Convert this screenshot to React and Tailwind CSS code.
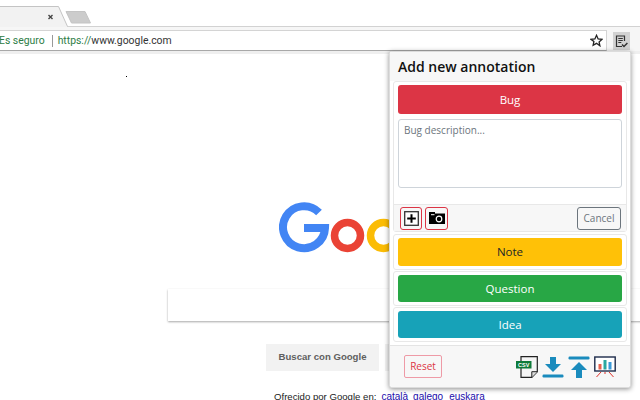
import React from 'react';

const panelFont = { fontFamily: '"Open Sans", "Noto Sans", sans-serif' };

function Logo() {
  // Google logo, cropped by the popup anyway
  return (
    <svg width="170" height="60" viewBox="0 0 170 60" fill="none" className="block">
      <path d="M40 10.5 A21 21 0 1 0 46 26 L25 26" stroke="#4285f4" strokeWidth="8" />
      <circle cx="68.5" cy="33.5" r="13" stroke="#ea4335" strokeWidth="7.5" />
      <circle cx="104.5" cy="33.5" r="13" stroke="#fbbc05" strokeWidth="7.5" />
    </svg>
  );
}

function PlusIcon() {
  return (
    <svg width="15" height="15" viewBox="0 0 15 15">
      <rect x="0.7" y="0.7" width="13.6" height="13.6" fill="#fff" stroke="#333" strokeWidth="1.3" />
      <path d="M7.5 3.2v8.6M3.2 7.5h8.6" stroke="#000" strokeWidth="2" />
    </svg>
  );
}

function CameraIcon() {
  return (
    <svg width="16" height="12" viewBox="0 0 16 12">
      <path d="M0 1.5V0h6v1.5h10V12H0z" fill="#000" />
      <rect x="2" y="2.2" width="3.5" height="1" fill="#fff" />
      <circle cx="10" cy="7" r="2.8" fill="#000" stroke="#fff" strokeWidth="1.2" />
    </svg>
  );
}

function CsvIcon() {
  return (
    <svg width="22" height="22" viewBox="0 0 22 22">
      <path d="M5 0.7h16.3v15l-5.5 5.6H5z" fill="#f5f5f5" stroke="#222" strokeWidth="1.2" />
      <path d="M15.8 21.3v-5.6h5.5" fill="#ddd" stroke="#222" strokeWidth="1" />
      <rect x="0" y="5" width="15.5" height="7.5" fill="#0f7a3a" />
      <text x="7.7" y="11" textAnchor="middle" fontSize="5.5" fontWeight="700" fill="#fff" fontFamily="Liberation Sans">CSV</text>
    </svg>
  );
}

function DownloadIcon() {
  return (
    <svg width="22" height="22" viewBox="0 0 22 22" fill="#1a8bbd">
      <path d="M8 1h6v7h5l-8 8-8-8h5z" />
      <rect x="0.5" y="18.5" width="21" height="3" rx="1.2" />
    </svg>
  );
}

function UploadIcon() {
  return (
    <svg width="22" height="22" viewBox="0 0 22 22" fill="#1a8bbd">
      <rect x="0.5" y="0.5" width="21" height="3" rx="1.2" />
      <path d="M11 6l8 8h-5v8H8v-8H3z" />
    </svg>
  );
}

function ChartIcon() {
  return (
    <svg width="22" height="22" viewBox="0 0 22 22">
      <rect x="0.8" y="1" width="20.4" height="14" fill="#fff" stroke="#1d2b4a" strokeWidth="1.4" />
      <rect x="4.5" y="8" width="3" height="5.5" fill="#e8604c" />
      <rect x="9.5" y="4" width="3" height="9.5" fill="#2ba8a0" />
      <rect x="14.5" y="6" width="3" height="7.5" fill="#3a9ad9" />
      <path d="M7 16l-4.5 5M15 16l4.5 5M11 16v2" stroke="#e0332b" strokeWidth="1" fill="none" />
    </svg>
  );
}

function ActionCard({ label, color, text, height, top }) {
  return (
    <div className={`mx-[3px] rounded-[3px] border border-[#e8e8e8] bg-white px-[4px] py-[3px] ${top}`}>
      <div className={`flex items-center justify-center rounded-[3px] text-[11.5px] ${color} ${text} ${height}`}>{label}</div>
    </div>
  );
}

export default function App() {
  return (
    <div className="relative h-[400px] w-[640px] overflow-hidden bg-white" style={{ fontFamily: '"Liberation Sans", Arial, sans-serif' }}>
      {/* tab strip */}
      <div className="relative h-[27px] border-b border-[#d2d2d2]">
        <svg width="100" height="27" viewBox="0 0 100 27" className="block">
          <path d="M0 6.5H58.5L67.5 27H0z" fill="#f2f2f2" />
          <path d="M0 6.5H58.5L67.5 26.5" fill="none" stroke="#c4c4c4" />
          <path d="M48.5 15l4 4M52.5 15l-4 4" stroke="#444" strokeWidth="1.4" />
          <path d="M66 11.5H85L90.5 23H71.5z" fill="#cccccc" stroke="#c4c4c4" strokeLinejoin="round" />
        </svg>
      </div>

      {/* toolbar */}
      <div className="flex h-[24px] items-end bg-[#f6f6f6]">
        <div className="flex h-[21px] w-[607px] items-center border border-l-0 border-[#d4d4d4] border-b-[#a8a8a8] bg-white text-[10.4px]" style={{ fontFamily: 'Roboto, sans-serif' }}>
          <span className="-ml-[1px] text-[#2d7d46]">Es seguro</span>
          <span className="ml-[7px] mr-[5px] h-[12px] w-px bg-[#999]"></span>
          <span className="text-[#2d7d46]">https://</span>
          <span className="text-[#333]">www.google.com</span>
          <span className="ml-auto mr-[3px] flex">
            <svg width="13" height="13" viewBox="0 0 24 24" fill="none" stroke="#222" strokeWidth="2.4">
              <path d="M12 2.5l3 6.6 7 .8-5.2 4.8 1.4 7L12 17.2l-6.2 3.5 1.4-7L2 9.9l7-.8z" />
            </svg>
          </span>
        </div>
        <div className="mb-[1px] ml-[6px] flex h-[18px] w-[17px] items-center justify-center bg-[#d2d2d2]">
          <svg width="13" height="13" viewBox="0 0 13 13" fill="none" stroke="#333" strokeWidth="1.2">
            <path d="M7 11.5H1.5V1h8v5" />
            <path d="M3.3 3.5h4.5M3.3 5.5h4.5M3.3 7.5h3" />
            <path d="M7 9.5l2 2 3.4-3.6" strokeWidth="1.5" />
          </svg>
        </div>
      </div>
      <div className="h-[3px] bg-[#efefef]"></div>

      {/* page */}
      <div className="relative">
        <div className="ml-[126px] mt-[22px] h-px w-px bg-black"></div>
        <div className="ml-[279px] mt-[125px]"><Logo /></div>
        <div className="ml-[168px] mt-[27px] h-[32px] w-[600px] bg-white shadow-[0_1px_2px_rgba(0,0,0,0.35)]"></div>
        <div className="ml-[266px] mt-[23px] flex gap-[6px]">
          <div className="flex h-[27px] w-[113px] items-center justify-center bg-[#f2f2f2] text-[9.6px] font-bold text-[#5f5f5f]">Buscar con Google</div>
          <div className="h-[27px] w-[100px] bg-[#f2f2f2]"></div>
        </div>
        <div className="ml-[274px] mt-[20px] flex items-baseline whitespace-nowrap text-[10px] leading-[12px] text-[#1a0dab]">
          <span className="mr-[5px] text-[9.6px] text-[#222]">Ofrecido por Google en:</span>
          <span className="mr-[5px]">català</span>
          <span className="mr-[6px]">galego</span>
          <span>euskara</span>
        </div>
      </div>

      {/* extension popup */}
      <div className="absolute left-[389px] top-[51px] flex h-[337px] w-[242px] flex-col rounded-[3px] border border-[#dcdcdc] bg-white shadow-[0_1px_5px_rgba(0,0,0,0.45)]" style={panelFont}>
        <div className="flex h-[29px] shrink-0 items-center bg-[#f7f7f7] pl-[8px] text-[14px] font-semibold text-[#111]">Add new annotation</div>

        <div className="mx-[3px] rounded-[3px] border border-[#e8e8e8] bg-white">
          <div className="px-[4px] pt-[3px]">
            <div className="flex h-[29px] items-center justify-center rounded-[3px] bg-[#dc3545] text-[11.5px] text-white">Bug</div>
            <div className="mt-[5px] h-[69px] rounded-[3px] border border-[#ced4da] px-[5px] py-[3px] text-[10px] text-[#6c757d]">Bug description...</div>
          </div>
          <div className="mt-[16px] flex h-[27px] items-center justify-between border-t border-[#e8e8e8] bg-[#f7f7f7] pl-[6px] pr-[5px]">
            <div className="flex gap-[3px]">
              <div className="flex h-[23px] w-[22px] items-center justify-center rounded-[3px] border border-[#dc3545]"><PlusIcon /></div>
              <div className="flex h-[23px] w-[23px] items-center justify-center rounded-[3px] border border-[#dc3545]"><CameraIcon /></div>
            </div>
            <div className="flex h-[23px] w-[44px] items-center justify-center rounded-[3px] border border-[#6c757d] text-[10px] text-[#6c757d]">Cancel</div>
          </div>
        </div>

        <ActionCard label="Note" color="bg-[#ffc107]" text="text-[#212529]" height="h-[28px]" top="mt-[2px]" />
        <ActionCard label="Question" color="bg-[#28a745]" text="text-white" height="h-[27px]" top="mt-[1px]" />
        <ActionCard label="Idea" color="bg-[#17a2b8]" text="text-white" height="h-[27px]" top="mt-[1px]" />

        <div className="mt-[3px] flex flex-1 items-center justify-between rounded-b-[3px] border-t border-[#e4e4e4] bg-[#f7f7f7] pl-[14px] pr-[14px]">
          <div className="flex h-[23px] w-[38px] items-center justify-center rounded-[2px] border border-[#ee9aa6] text-[10px] text-[#dc3545]">Reset</div>
          <div className="flex items-center gap-[4px]">
            <CsvIcon />
            <DownloadIcon />
            <UploadIcon />
            <ChartIcon />
          </div>
        </div>
      </div>
    </div>
  );
}
